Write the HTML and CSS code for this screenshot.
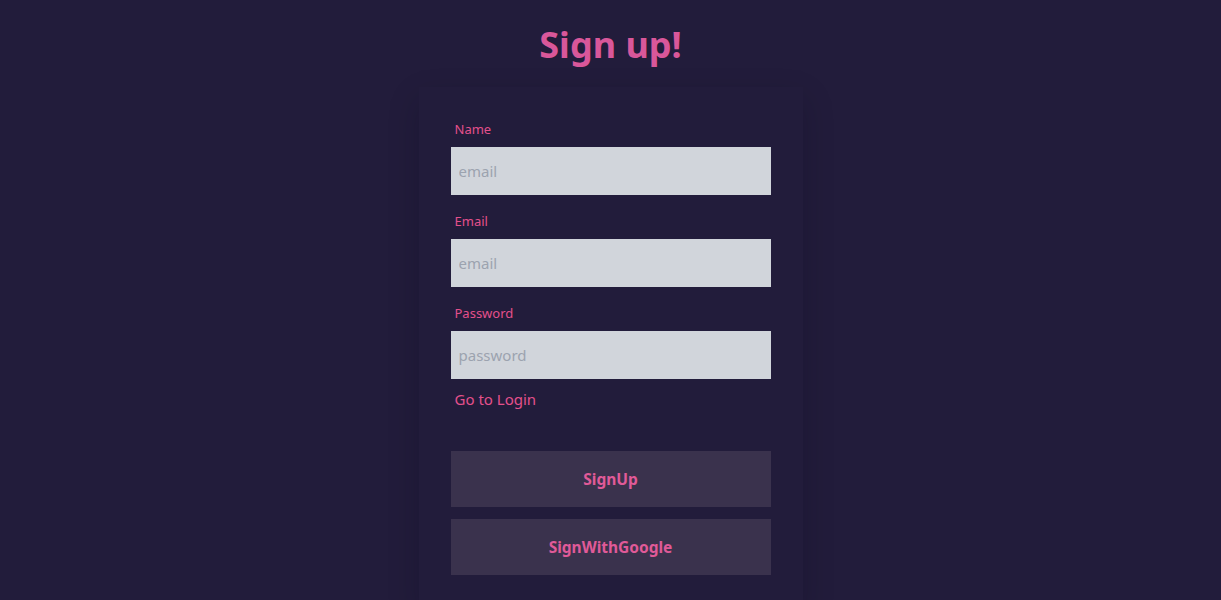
FILE: index.html
```html
<!DOCTYPE html>
<html lang="en">
<head>
<meta charset="utf-8">
<title>Sign up</title>
<link rel="stylesheet" href="styles.css">
</head>
<body>
<main class="page">
  <h1 class="title">Sign up!</h1>
  <form class="card">
    <div class="field">
      <label class="label" for="name">Name</label>
      <input class="input" id="name" type="text" placeholder="email">
    </div>
    <div class="field">
      <label class="label" for="email">Email</label>
      <input class="input" id="email" type="email" placeholder="email">
    </div>
    <div class="field">
      <label class="label" for="password">Password</label>
      <input class="input" id="password" type="password" placeholder="password">
    </div>
    <a class="link" href="#">Go to Login</a>
    <div class="actions">
      <button class="btn" type="button">SignUp</button>
      <button class="btn" type="button">SignWithGoogle</button>
    </div>
  </form>
</main>
</body>
</html>
```

FILE: styles.css
```css
* { box-sizing: border-box; }
html, body {
  margin: 0;
  background: #221c3b;
  font-family: "Noto Sans", "Open Sans", sans-serif;
}
.page {
  min-height: 100vh;
  display: flex;
  flex-direction: column;
  align-items: center;
  padding-top: 25px;
}
.title {
  margin: 0;
  font-size: 36px;
  line-height: 40px;
  font-weight: 700;
  color: #d9579a;
}
.card {
  margin-top: 22px;
  width: 384px;
  padding: 32px;
  display: flex;
  flex-direction: column;
  background: #221c3b;
  box-shadow: 0 12px 30px rgba(10, 6, 25, 0.2);
}
.field {
  display: flex;
  flex-direction: column;
  gap: 8px;
  margin-bottom: 16px;
}
.field:nth-of-type(3) { margin-bottom: 0; }
.label {
  padding-left: 4px;
  font-size: 13px;
  line-height: 20px;
  color: #e4508c;
}
.input {
  height: 48px;
  border: 0;
  outline: 0;
  padding: 0 8px;
  background: #d1d5db;
  font-family: inherit;
  font-size: 15px;
  color: #374151;
}
.input::placeholder { color: #9ca3af; }
.link {
  margin-top: 8px;
  padding-left: 4px;
  font-size: 15px;
  line-height: 24px;
  color: #e4508c;
  text-decoration: none;
}
.actions {
  margin-top: 40px;
  display: flex;
  flex-direction: column;
  gap: 12px;
}
.btn {
  height: 56px;
  border: 0;
  background: #3a324d;
  font-family: inherit;
  font-size: 15.5px;
  font-weight: 700;
  color: #e05a98;
  cursor: pointer;
}
```
